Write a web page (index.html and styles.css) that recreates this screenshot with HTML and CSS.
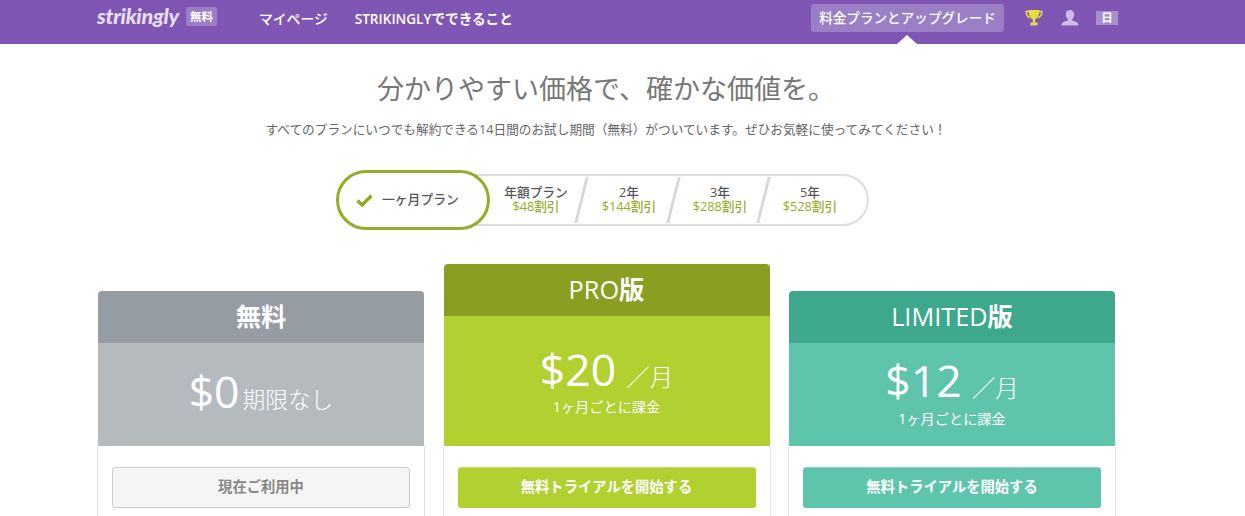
FILE: index.html
```html
<!DOCTYPE html>
<html lang="ja">
<head>
    <meta charset="UTF-8">
    <meta name="viewport" content="width=device-width, initial-scale=1.0">
    <title>料金プラン</title>
    <link rel="stylesheet" href="styles.css">
</head>
<body>
    <nav class="topbar">
        <div class="topbar-left">
            <span class="logo">strikingly</span>
            <span class="plan-badge">無料</span>
            <a class="nav-link nav-link-first">マイページ</a>
            <a class="nav-link">STRIKINGLYでできること</a>
        </div>
        <div class="topbar-right">
            <a class="upgrade">料金プランとアップグレード</a>
            <svg class="icon-trophy" width="18" height="18" viewBox="0 0 18 18">
                <path fill="none" stroke="#e6dc3c" stroke-width="1.6" d="M4 2.500H1.200C1.200 6 2.600 8 5 8.600M14 2.500h2.800C16.800 6 15.400 8 13 8.600"/>
                <path fill="#e6dc3c" d="M3.600 1h10.800C14.400 6 12.600 9.400 10.200 10.400V13.400H12.600V16.500H5.400V13.400H7.800V10.400C5.400 9.400 3.600 6 3.600 1Z"/>
            </svg>
            <svg class="icon-user" width="20" height="18" viewBox="0 0 20 18">
                <path fill="#cdbce4" d="M10 1c2.700 0 4.200 2 4.200 4.600 0 2-.9 3.700-2 4.600v1.400c2.800.8 6.300 1.700 6.300 4.600v.3H1.500v-.3c0-2.900 3.500-3.800 6.300-4.600v-1.400c-1.100-.9-2-2.600-2-4.600C5.800 3 7.300 1 10 1Z"/>
            </svg>
            <span class="lang">日</span>
        </div>
    </nav>
    <div class="topbar-arrow"></div>

    <header class="intro">
        <h1>分かりやすい価格で、確かな価値を。</h1>
        <p>すべてのプランにいつでも解約できる14日間のお試し期間（無料）がついています。ぜひお気軽に使ってみてください！</p>
    </header>

    <div class="period">
        <div class="period-active">
            <svg width="17" height="13" viewBox="0 0 17 13">
                <path fill="none" stroke="#8fa928" stroke-width="3.400" d="M1.500 6.500L6 11 15.500 1.800"/>
            </svg>
            <span>一ヶ月プラン</span>
        </div>
        <div class="period-bar">
            <div class="period-item"><b>年額プラン</b><span>$48割引</span></div>
            <div class="period-item"><b>2年</b><span>$144割引</span></div>
            <div class="period-item"><b>3年</b><span>$288割引</span></div>
            <div class="period-item"><b>5年</b><span>$528割引</span></div>
        </div>
    </div>

    <section class="plans">
        <div class="plan plan-free">
            <h2 class="plan-title">無料</h2>
            <div class="plan-price">
                <div class="price"><span class="amount">$0</span><span class="unit unit-tight">期限なし</span></div>
            </div>
            <div class="plan-body"><a class="plan-button">現在ご利用中</a></div>
        </div>
        <div class="plan plan-pro">
            <h2 class="plan-title"><span class="latin">PRO</span>版</h2>
            <div class="plan-price">
                <div class="price"><span class="amount">$20</span><span class="unit">／月</span></div>
                <p class="billing">1ヶ月ごとに課金</p>
            </div>
            <div class="plan-body"><a class="plan-button">無料トライアルを開始する</a></div>
        </div>
        <div class="plan plan-limited">
            <h2 class="plan-title"><span class="latin">LIMITED</span>版</h2>
            <div class="plan-price">
                <div class="price"><span class="amount">$12</span><span class="unit">／月</span></div>
                <p class="billing">1ヶ月ごとに課金</p>
            </div>
            <div class="plan-body"><a class="plan-button">無料トライアルを開始する</a></div>
        </div>
    </section>
</body>
</html>
```

FILE: styles.css
```css
html, body {
    height: 516px;
    overflow: hidden;
}
body {
    margin: 0;
    background-color: #fff;
    color: #666;
    font-family: "Open Sans", "Noto Sans CJK JP", sans-serif;
    position: relative;
}
h1, h2, p {
    margin: 0;
    font-weight: normal;
}

/* top bar */
.topbar {
    height: 44px;
    background-color: #7f56b4;
    display: flex;
    justify-content: space-between;
    padding: 0 127px 0 97px;
    box-sizing: border-box;
}
.topbar-left, .topbar-right {
    display: flex;
    align-items: center;
}
.topbar-left {
    padding-bottom: 9px;
}
.logo {
    width: 82px;
    margin-bottom: 3px;
    font-family: "Lato", sans-serif;
    font-style: italic;
    font-weight: 900;
    font-size: 21.500px;
    letter-spacing: -.3px;
    color: #e6dff0;
}
.plan-badge {
    margin: 0 0 2px 7px;
    padding: 0 4px;
    height: 19px;
    line-height: 19px;
    font-size: 11.500px;
    font-weight: bold;
    color: #fff;
    background-color: #9a7ec6;
    border-radius: 2px;
}
.nav-link {
    margin-left: 27px;
    font-size: 13.600px;
    font-weight: 600;
    color: #fff;
}
.nav-link-first {
    margin-left: 42px;
    font-size: 13.800px;
    font-weight: 500;
}
.topbar-right {
    padding-bottom: 8px;
}
.upgrade {
    width: 193px;
    height: 28px;
    line-height: 28px;
    text-align: center;
    font-size: 13.600px;
    font-weight: 500;
    color: #fff;
    background-color: #9a7ec6;
    border-radius: 3px;
}
.icon-trophy {
    margin-left: 21px;
}
.icon-user {
    margin-left: 17px;
}
.lang {
    margin-left: 16px;
    width: 22px;
    height: 14px;
    line-height: 14px;
    text-align: center;
    font-size: 11.500px;
    font-weight: bold;
    color: #fff;
    background-color: #a68fcb;
}
.topbar-arrow {
    position: absolute;
    left: 897px;
    top: 35px;
    border-left: 10px solid transparent;
    border-right: 10px solid transparent;
    border-bottom: 9px solid #fff;
}

/* heading */
.intro {
    text-align: center;
    padding: 27px 33px 0 0;
}
.intro h1 {
    font-size: 27px;
    line-height: 36px;
    color: #777;
}
.intro p {
    margin-top: 13px;
    font-size: 12.670px;
    line-height: 18px;
    color: #666;
}

/* billing period switch */
.period {
    display: flex;
    align-items: center;
    margin: 32px 0 0 336px;
    height: 60px;
}
.period-active {
    width: 154px;
    height: 60px;
    box-sizing: border-box;
    border: 3px solid #93ad2a;
    border-radius: 30px;
    background-color: #fff;
    display: flex;
    align-items: center;
    gap: 9px;
    padding: 0 0 4px 17px;
    font-size: 12.800px;
    font-weight: 500;
    color: #555;
    position: relative;
    z-index: 1;
}
.period-active svg {
    margin-top: 4px;
}
.period-bar {
    margin-left: -30px;
    padding-left: 27px;
    width: 409px;
    height: 52px;
    box-sizing: border-box;
    border: 2.500px solid #ddd;
    border-radius: 0 26px 26px 0;
    display: flex;
}
.period-item {
    width: 90px;
    padding-bottom: 2px;
    box-sizing: border-box;
    display: flex;
    flex-direction: column;
    align-items: center;
    justify-content: center;
    font-size: 12.700px;
    line-height: 14px;
    position: relative;
}
.period-item:nth-child(1) {
    width: 94px;
}
.period-item:nth-child(2) {
    width: 92px;
}
.period-item::after {
    content: "";
    position: absolute;
    right: 0;
    top: 1px;
    bottom: 1px;
    border-right: 3px solid #d8d8d8;
    transform: skewX(-14deg);
}
.period-item:last-child::after {
    display: none;
}
.period-item b {
    color: #555;
    font-weight: 500;
}
.period-item span {
    color: #93ad2a;
    font-weight: 500;
}

/* plan cards */
.plans {
    display: flex;
    align-items: flex-start;
    gap: 19.500px;
    padding-left: 98px;
    margin-top: 34px;
}
.plan {
    width: 326px;
    margin-top: 27px;
}
.plan-pro {
    margin-top: 0;
}
.plan-title {
    height: 52px;
    line-height: 50px;
    text-align: center;
    font-size: 25.300px;
    font-weight: 700;
    color: #fff;
    border-radius: 4px 4px 0 0;
}
.latin {
    font-weight: 500;
}
.plan-price {
    height: 103px;
    box-sizing: border-box;
    color: #fff;
    text-align: center;
}
.plan-pro .plan-price {
    height: 130px;
    padding-top: 22px;
}
.plan-free .plan-price {
    padding-top: 21px;
}
.plan-limited .plan-price {
    padding-top: 6px;
}
.price {
    height: 75px;
    display: flex;
    align-items: baseline;
    justify-content: center;
}
.plan-pro .price, .plan-limited .price {
    height: 54px;
    padding-top: 4px;
}
.amount {
    font-size: 44.500px;
    font-weight: 400;
    line-height: 54px;
}
.unit {
    margin-left: 10px;
    font-size: 23.500px;
    font-weight: 300;
}
.unit-tight {
    margin-left: 3px;
    font-size: 22.700px;
}
.billing {
    margin-top: 1px;
    font-size: 14.200px;
    line-height: 20px;
}
.plan-limited .billing {
    margin-top: 2px;
}
.plan-body {
    background-color: #fff;
    padding: 21px 14px 20px;
    height: 70px;
    box-shadow: -1px 0 0 #e4e4e4, 1px 0 0 #e4e4e4;
}
.plan-button {
    display: block;
    height: 41px;
    line-height: 37px;
    box-sizing: border-box;
    text-align: center;
    font-size: 14.300px;
    font-weight: 700;
    color: #fff;
    border-radius: 3px;
}

.plan-free .plan-title { background-color: #959ca3; }
.plan-free .plan-price { background-color: #b5babf; }
.plan-free .plan-button {
    color: #888;
    background-color: #f5f5f5;
    border: 1px solid #ccc;
}
.plan-pro .plan-title { background-color: #8a9f22; }
.plan-pro .plan-price { background-color: #b1d130; }
.plan-pro .plan-button { background-color: #b1d130; border-top: 1px solid #c5dd6a; }
.plan-limited .plan-title { background-color: #3da88c; }
.plan-limited .plan-price { background-color: #5ec5ac; }
.plan-limited .plan-button { background-color: #5ec5ac; border-top: 1px solid #8ad5c3; }
```
